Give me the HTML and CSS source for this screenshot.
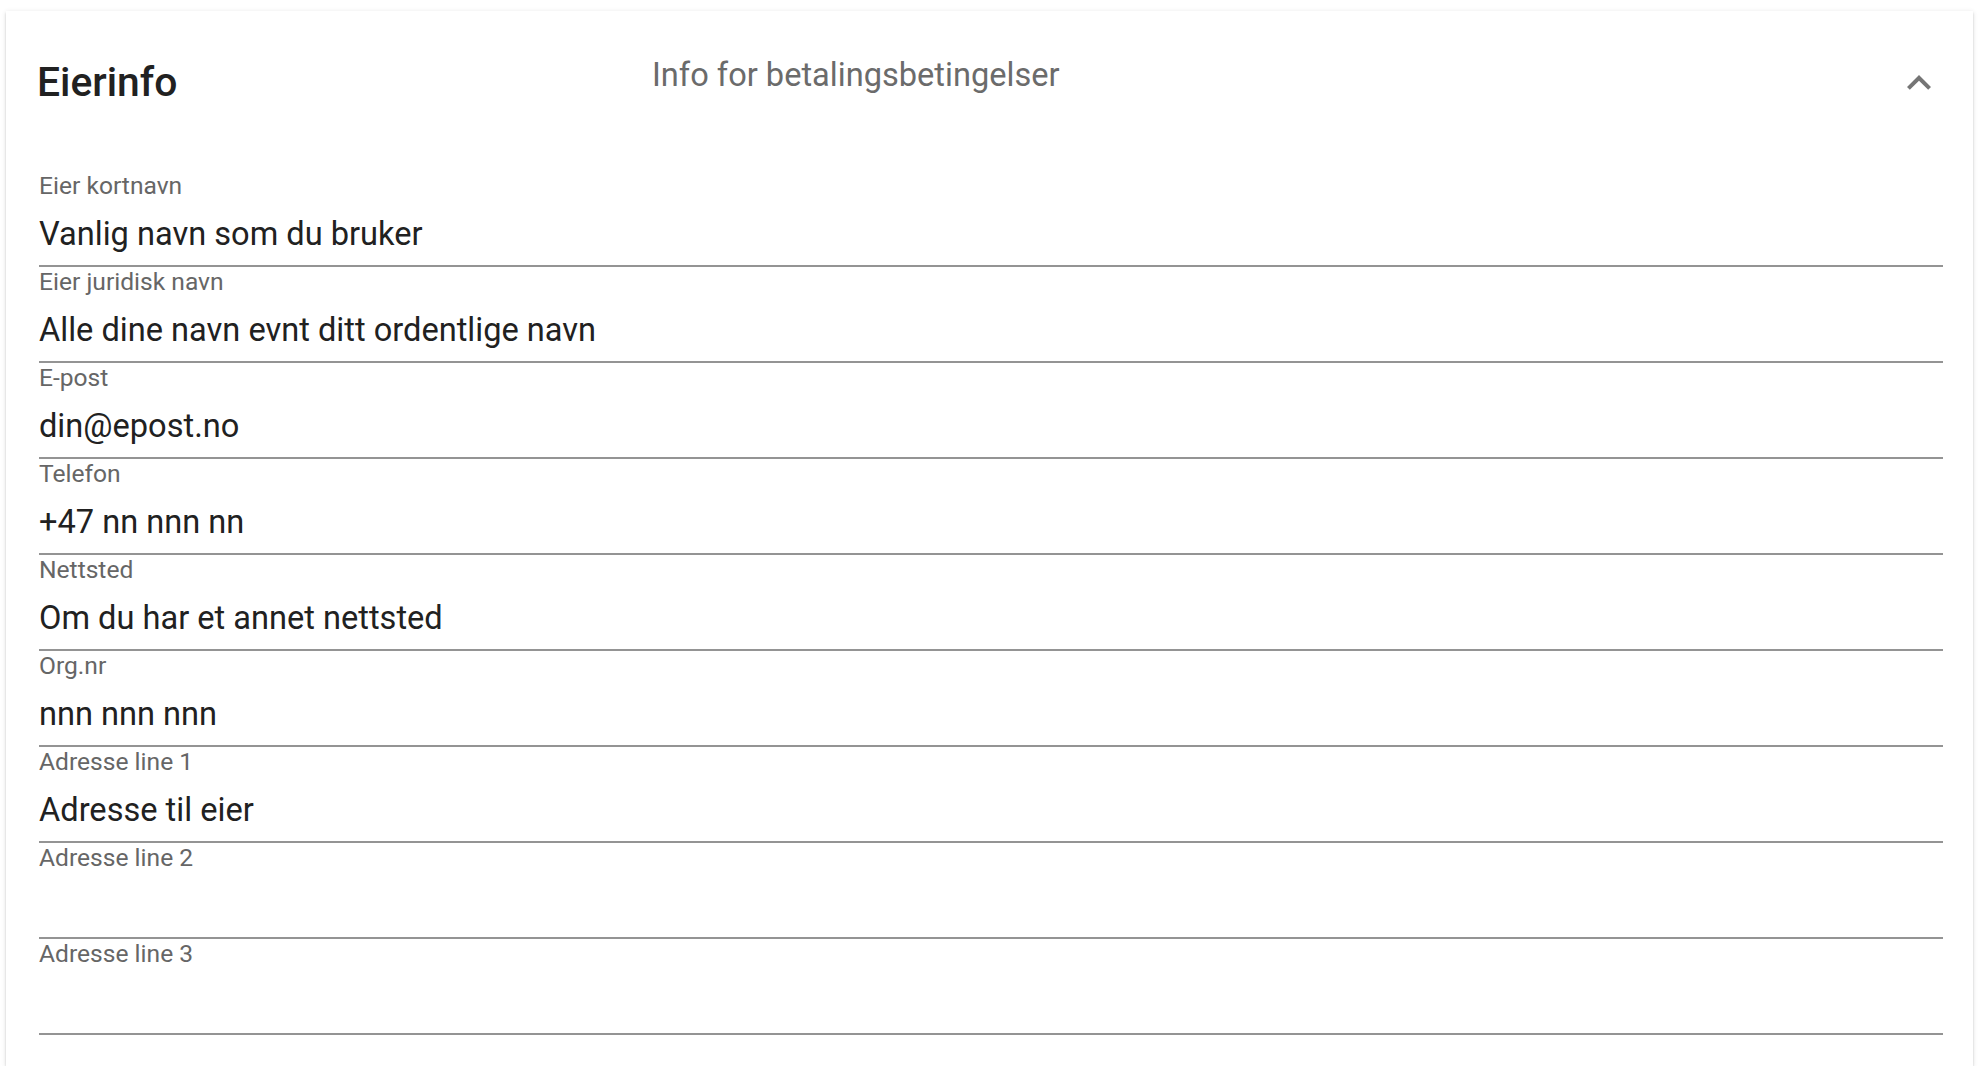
FILE: index.html
```html
<!DOCTYPE html>
<html lang="no">
<head>
<meta charset="utf-8">
<title>Eierinfo</title>
<link rel="stylesheet" href="styles.css">
</head>
<body>
<div class="page">
  <section class="panel">
    <header class="panel-header">
      <h2 class="panel-title">Eierinfo</h2>
      <div class="panel-desc">Info for betalingsbetingelser</div>
      <svg class="chevron" viewBox="0 0 24 24" width="48" height="48" aria-hidden="true">
        <path d="M12 8l-6 6 1.41 1.41L12 10.83l4.59 4.58L18 14z" fill="#757575"/>
      </svg>
    </header>
    <div class="panel-body">
      <div class="field"><div class="field-label">Eier kortnavn</div><div class="field-value">Vanlig navn som du bruker</div></div>
      <div class="field"><div class="field-label">Eier juridisk navn</div><div class="field-value">Alle dine navn evnt ditt ordentlige navn</div></div>
      <div class="field"><div class="field-label">E-post</div><div class="field-value">din@epost.no</div></div>
      <div class="field"><div class="field-label">Telefon</div><div class="field-value">+47 nn nnn nn</div></div>
      <div class="field"><div class="field-label">Nettsted</div><div class="field-value">Om du har et annet nettsted</div></div>
      <div class="field"><div class="field-label">Org.nr</div><div class="field-value">nnn nnn nnn</div></div>
      <div class="field"><div class="field-label">Adresse line 1</div><div class="field-value">Adresse til eier</div></div>
      <div class="field"><div class="field-label">Adresse line 2</div><div class="field-value"></div></div>
      <div class="field"><div class="field-label">Adresse line 3</div><div class="field-value"></div></div>
    </div>
  </section>
</div>
</body>
</html>
```
FILE: styles.css
```css
html, body {
  margin: 0;
  padding: 0;
  background: #ffffff;
}

body {
  font-family: Roboto, "Liberation Sans", Arial, sans-serif;
  color: #212121;
}

.page {
  padding: 11px 5px 0 6px;
}

.panel {
  background: #ffffff;
  box-shadow: 0 3px 1px -2px rgba(0, 0, 0, 0.2), 0 2px 2px 0 rgba(0, 0, 0, 0.14), 0 1px 5px 0 rgba(0, 0, 0, 0.12);
  padding: 0 30px 31px 33px;
}

.panel-header {
  display: flex;
  align-items: flex-start;
  padding-top: 44px;
  height: 149px;
  box-sizing: border-box;
}

.panel-title {
  margin: 3px 0 0 -2px;
  width: 615px;
  flex: none;
  font-size: 40.8px;
  line-height: 48px;
  font-weight: 500;
  color: #212121;
}

.panel-desc {
  flex: 1;
  font-size: 32.6px;
  line-height: 40px;
  color: #6b6b6b;
}

.chevron {
  flex: none;
  margin: 4px 0 0 0;
}

.panel-body {
  padding-top: 11px;
}

.field {
  padding-top: 1px;
  border-bottom: 2px solid #949494;
}

.field-label {
  font-size: 24.6px;
  line-height: 28px;
  height: 28px;
  color: #666666;
}

.field-value {
  margin-top: 16px;
  padding-bottom: 13px;
  font-size: 32.6px;
  line-height: 36px;
  height: 36px;
  color: #212121;
  white-space: nowrap;
}
```
